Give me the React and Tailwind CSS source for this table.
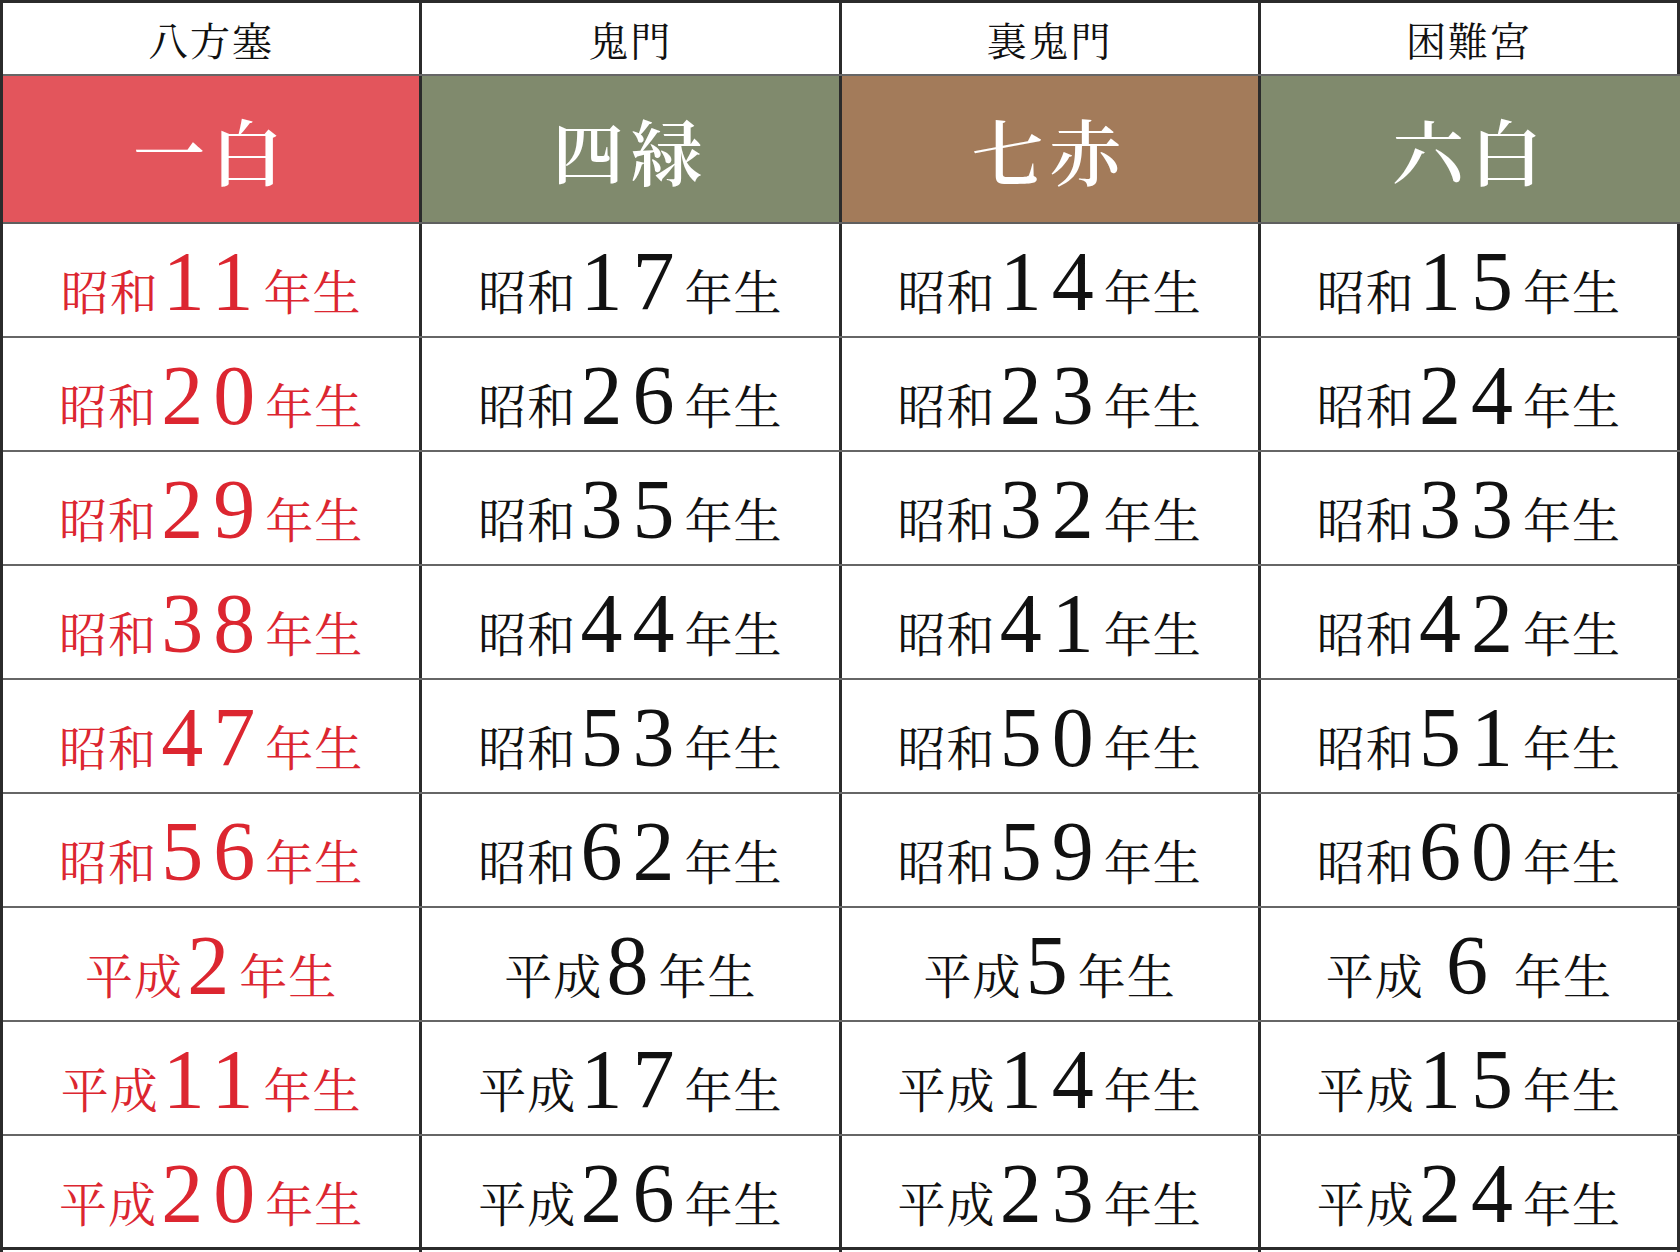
import React from "react";

const heads = ["八方塞", "鬼門", "裏鬼門", "困難宮"];

const stars = [
  { label: "一白", bg: "bg-[#e3555c]" },
  { label: "四緑", bg: "bg-[#808a6d]" },
  { label: "七赤", bg: "bg-[#a37b5a]" },
  { label: "六白", bg: "bg-[#808a6d]" },
];

// each row: [era, year] for the 4 columns
const rows = [
  [["昭和", "11"], ["昭和", "17"], ["昭和", "14"], ["昭和", "15"]],
  [["昭和", "20"], ["昭和", "26"], ["昭和", "23"], ["昭和", "24"]],
  [["昭和", "29"], ["昭和", "35"], ["昭和", "32"], ["昭和", "33"]],
  [["昭和", "38"], ["昭和", "44"], ["昭和", "41"], ["昭和", "42"]],
  [["昭和", "47"], ["昭和", "53"], ["昭和", "50"], ["昭和", "51"]],
  [["昭和", "56"], ["昭和", "62"], ["昭和", "59"], ["昭和", "60"]],
  [["平成", "2"], ["平成", "8"], ["平成", "5"], ["平成", "6", true]],
  [["平成", "11"], ["平成", "17"], ["平成", "14"], ["平成", "15"]],
  [["平成", "20"], ["平成", "26"], ["平成", "23"], ["平成", "24"]],
];

const Cell = ({ era, year, spaced, red }) => (
  <div
    className={`flex items-center justify-center pt-1 border-r-[3px] border-[#2b2b2b] ${
      red ? "text-[#dc2630]" : "text-[#111]"
    }`}
  >
    <div className="flex items-baseline">
      <span className="font-['Noto_Serif_CJK_JP',serif] text-[48px] leading-none tracking-[1px]">{era}</span>
      <span
        className={`font-['Liberation_Serif',serif] text-[84px] leading-none tracking-[10px] ${
          spaced ? "ml-[22px] mr-[16px]" : "ml-[4px]"
        }`}
      >
        {year}
      </span>
      <span className="font-['Noto_Serif_CJK_JP',serif] text-[48px] leading-none tracking-[1px]">年生</span>
    </div>
  </div>
);

const App = () => {
  return (
    <div className="w-[1680px] h-[1252px] overflow-hidden bg-white">
      <div className="border-t-[3px] border-l-[3px] border-[#2b2b2b]">
        {/* header */}
        <div className="grid grid-cols-4 h-[73px] border-b-2 border-[#666]">
          {heads.map((h) => (
            <div
              key={h}
              className="flex items-center justify-center border-r-[3px] border-[#2b2b2b] font-['Noto_Serif_CJK_JP',serif] text-[40px] text-[#111] leading-none tracking-[2px]"
            >
              {h}
            </div>
          ))}
        </div>

        {/* star colours */}
        <div className="grid grid-cols-4 h-[148px] border-b-2 border-[#5f5f5f]">
          {stars.map((s, i) => (
            <div
              key={i}
              className={`flex items-center justify-center ${s.bg} ${
                i < 3 ? "border-r-[3px] border-[#2b2b2b]" : ""
              } font-['Noto_Serif_CJK_JP',serif] text-[72px] font-semibold text-white leading-none tracking-[6px]`}
            >
              {s.label}
            </div>
          ))}
        </div>

        {/* years */}
        {rows.map((r, ri) => (
          <div
            key={ri}
            className={`grid grid-cols-4 h-[114px] ${
              ri === rows.length - 1
                ? "border-b-[3px] border-[#2b2b2b]"
                : "border-b-2 border-[#666]"
            }`}
          >
            {r.map(([era, year, spaced], ci) => (
              <Cell key={ci} era={era} year={year} spaced={spaced} red={ci === 0} />
            ))}
          </div>
        ))}

        <div className="grid grid-cols-4 h-[20px]">
          {heads.map((h) => (
            <div key={h} className="border-r-[3px] border-[#2b2b2b]" />
          ))}
        </div>
      </div>
    </div>
  );
};

export default App;
